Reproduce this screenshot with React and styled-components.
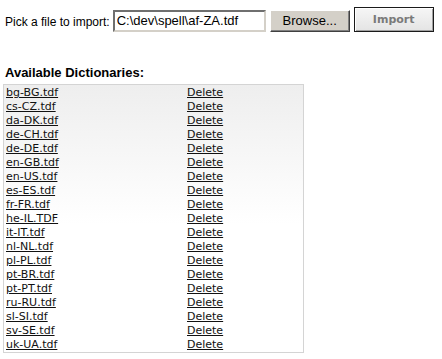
import React from "react";
import styled, { createGlobalStyle } from "styled-components";

const files = [
  "bg-BG.tdf", "cs-CZ.tdf", "da-DK.tdf", "de-CH.tdf", "de-DE.tdf",
  "en-GB.tdf", "en-US.tdf", "es-ES.tdf", "fr-FR.tdf", "he-IL.TDF",
  "it-IT.tdf", "nl-NL.tdf", "pl-PL.tdf", "pt-BR.tdf", "pt-PT.tdf",
  "ru-RU.tdf", "sl-SI.tdf", "sv-SE.tdf", "uk-UA.tdf",
];

const GlobalStyle = createGlobalStyle`
  body {
    margin: 0;
    background: #fff;
    font-family: "Liberation Sans", Arial, sans-serif;
  }
`;

const App = () => {
  return (
    <Main>
      <GlobalStyle />
      <ImportRow>
        <Label>Pick a file to import:</Label>
        <FileInput readOnly value="C:\dev\spell\af-ZA.tdf" />
        <BrowseButton>Browse...</BrowseButton>
        <ImportButton disabled>Import</ImportButton>
      </ImportRow>

      <Heading>Available Dictionaries:</Heading>

      <ListBox>
        {files.map((name) => (
          <Row key={name}>
            <Link href="#">{name}</Link>
            <Link href="#">Delete</Link>
          </Row>
        ))}
      </ListBox>
    </Main>
  );
};

export default App;

const Main = styled.div`
  padding: 7px 0 0 3px;
`;

const ImportRow = styled.div`
  display: flex;
  align-items: center;
  height: 25px;
`;

const Label = styled.span`
  font-size: 12px;
  color: #000;
  margin: 5px 3px 0 2px;
`;

const FileInput = styled.input`
  box-sizing: border-box;
  width: 153px;
  height: 22px;
  margin: 2px 0 0;
  padding: 0 2px;
  font-family: "Liberation Sans", Arial, sans-serif;
  font-size: 13px;
  color: #000;
  background: #fff;
  border: 2px solid;
  border-color: #6f6f6f #d4d0c8 #d4d0c8 #6f6f6f;
  outline: none;
`;

const BrowseButton = styled.button`
  box-sizing: border-box;
  width: 80px;
  height: 22px;
  margin: 2px 0 0 4px;
  padding: 0;
  font-family: "Liberation Sans", Arial, sans-serif;
  font-size: 13px;
  color: #000;
  background: #d4d0c8;
  border: 1px solid;
  border-color: #fff #404040 #404040 #fff;
  box-shadow: inset -1px -1px 0 #808080;
`;

const ImportButton = styled.button`
  box-sizing: border-box;
  width: 80px;
  height: 25px;
  margin-left: 4px;
  padding: 0;
  font-family: "DejaVu Sans", Verdana, sans-serif;
  font-size: 11px;
  font-weight: bold;
  color: #7a7a7a;
  background: linear-gradient(#f6f6f6, #e4e4e4);
  border: 1px solid #1a1a1a;
  box-shadow: inset 1px 1px 0 #fff, inset -1px -1px 0 #a0a0a0;
`;

const Heading = styled.h4`
  margin: 33px 0 0 2px;
  font-size: 13px;
  line-height: 15px;
  font-weight: bold;
  color: #000;
`;

const ListBox = styled.div`
  box-sizing: border-box;
  width: 301px;
  margin-top: 4px;
  padding: 1px 1px 0;
  border: 1px solid #d4d4d4;
  background: linear-gradient(#eeeeee 0%, #ffffff 52%, #ffffff 100%);
`;

const Row = styled.div`
  display: grid;
  grid-template-columns: 181px 1fr;
  height: 14px;
  padding-left: 1px;
  font-family: "DejaVu Sans", Verdana, sans-serif;
  font-size: 11px;
  line-height: 14px;
`;

const Link = styled.a`
  color: #111;
  text-decoration: underline;
  justify-self: start;
`;
